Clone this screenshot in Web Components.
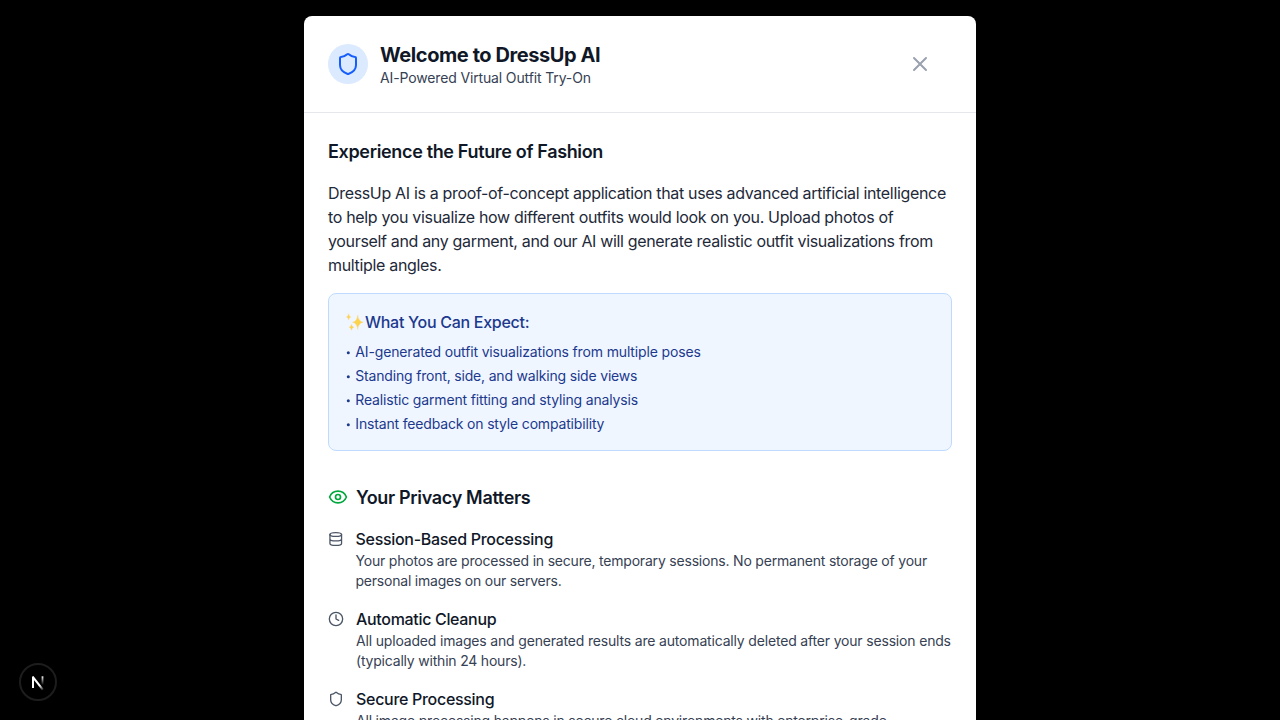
<!DOCTYPE html>
<html lang="en">
<head>
<meta charset="utf-8">
<title>DressUp AI</title>
<style>
html,body{margin:0;height:100%;background:#000;overflow:hidden}
body{font-family:Inter,"Noto Sans",sans-serif;font-size:16px;line-height:24px;color:#101828}
</style>
</head>
<body>
<welcome-page></welcome-page>
<script>
const define=(name,html,setup)=>{
  const t=document.createElement('template');t.innerHTML=html;
  customElements.define(name,class extends HTMLElement{
    constructor(){super();this.attachShadow({mode:'open'}).append(t.content.cloneNode(true));}
    connectedCallback(){if(setup)setup(this,this.shadowRoot);}
  });
};
const icons={
  shield:'<path d="M20 13c0 5-3.5 7.5-7.66 8.95a1 1 0 0 1-.67-.01C7.5 20.5 4 18 4 13V6a1 1 0 0 1 1-1c2 0 4.5-1.2 6.24-2.72a1.17 1.17 0 0 1 1.52 0C14.51 3.81 17 5 19 5a1 1 0 0 1 1 1z"/>',
  x:'<path d="M18 6 6 18M6 6l12 12"/>',
  eye:'<path d="M2.062 12.348a1 1 0 0 1 0-.696 10.75 10.75 0 0 1 19.876 0 1 1 0 0 1 0 .696 10.75 10.75 0 0 1-19.876 0"/><circle cx="12" cy="12" r="3"/>',
  database:'<ellipse cx="12" cy="5" rx="9" ry="3"/><path d="M3 5v14a9 3 0 0 0 18 0V5M3 12a9 3 0 0 0 18 0"/>',
  clock:'<circle cx="12" cy="12" r="10"/><path d="M12 6v6l4 2"/>'
};
define('line-icon','<style>:host{display:block;flex:none;width:var(--w,var(--s,16px));height:var(--s,16px)}svg{display:block;width:100%;height:100%;fill:none;stroke:currentColor;stroke-width:2;stroke-linecap:round;stroke-linejoin:round}</style><svg viewBox="0 0 24 24"></svg>',
  (el,r)=>{r.querySelector('svg').innerHTML=icons[el.getAttribute('name')];});
/* One unbroken line of text; "track" is its letter spacing in px. */
define('text-line','<style>:host{display:block;white-space:nowrap}</style><slot></slot>',
  el=>{el.style.letterSpacing=(el.getAttribute('track')||0)+'px';});
define('sparkle-icon','<style>:host{display:block;flex:none;width:20px;height:20px}svg{display:block}</style><svg width="20" height="20" viewBox="0 0 20 20"><g fill="#fcd34d" stroke="#fbd98e" stroke-width=".4"><path d="M12.700 3q.6 6.400 5.600 7.200-5 .8-5.600 7.300-.6-6.500-5.300-7.300 4.700-.8 5.300-7.200z"/><path d="M3.600 1.700q.3 2.800 2.200 3.200-1.900.4-2.200 3.200-.3-2.800-2.200-3.200 1.900-.4 2.200-3.200z"/><path d="M6.500 12.300q.3 2.600 2.400 3-2.100.4-2.400 3-.3-2.600-2.400-3 2.100-.4 2.400-3z"/></g></svg>');
define('dialog-header',`<style>
:host{display:flex;align-items:center;gap:12px;padding:24px;border-bottom:1px solid #e5e7eb}
.badge{display:flex;align-items:center;justify-content:center;width:40px;height:40px;border-radius:50%;background:#dbeafe;color:#155dfc;--s:24px}
.title{font-weight:700;font-size:20px;line-height:28px;padding-top:1px;margin-bottom:-1px;color:#101828}
.sub{font-size:14px;line-height:20px;color:#364153}
button{all:unset;display:flex;padding:0 20px;margin-left:auto;color:#99a1af;--s:24px}
</style><div class="badge"><line-icon name="shield"></line-icon></div><div><div class="title"><slot name="title"></slot></div><div class="sub"><slot name="sub"></slot></div></div><button aria-label="Close"><line-icon name="x"></line-icon></button>`);
define('info-section',`<style>:host{display:block}h3{display:flex;align-items:center;gap:8px;margin:0 0 16px;height:28px;font-size:18px;line-height:28px;font-weight:600;color:#101828}slot[name=heading]::slotted(*){padding-top:2px}</style><h3><slot name="icon"></slot><slot name="heading"></slot></h3><slot></slot>`);
define('expect-box',`<style>:host{display:block;margin-top:16px;padding:16px;border:1px solid #bedbff;border-radius:8px;background:#eff6ff;color:#1c398e}
.h{display:flex;align-items:center;height:24px;font-weight:500;margin-bottom:8px}.list{display:grid;gap:4px;font-size:14px;line-height:20px;color:#1c398e}</style><div class="h"><sparkle-icon></sparkle-icon><slot name="heading"></slot></div><div class="list"><slot></slot></div>`);
define('bullet-item','<style>:host{display:flex}.dot{width:10.300px;flex:none}svg{display:block}</style><span class="dot"><svg width="10" height="20"><circle cx="3.300" cy="10.700" r="1.500" fill="currentColor"/></svg></span><slot></slot>');
define('privacy-item',`<style>:host{display:flex;gap:12px;margin-bottom:16px}line-icon{margin-top:4px;color:#4a5565}.t{font-weight:500;line-height:24px;color:#101828}.d{font-size:14px;line-height:20px;color:#364153}</style><line-icon></line-icon><div><div class="t"><slot name="title"></slot></div><div class="d"><slot></slot></div></div>`,
  (el,r)=>{const i=r.querySelector('line-icon');i.setAttribute('name',el.getAttribute('icon'));i.shadowRoot.querySelector('svg').innerHTML=icons[el.getAttribute('icon')];});
define('dev-badge',`<style>:host{position:fixed;left:19px;top:663px;width:38px;height:38px;box-sizing:border-box;border:2px solid #1d1d1d;border-radius:50%;background:#000}svg{display:block}</style>
<svg width="34" height="34" viewBox="0 0 34 34" fill="none"><defs><linearGradient id="a" x1="16" y1="16" x2="23" y2="25" gradientUnits="userSpaceOnUse"><stop offset=".45" stop-color="#fff"/><stop offset="1" stop-color="#fff" stop-opacity="0"/></linearGradient><linearGradient id="b" x1="22" y1="11" x2="22" y2="20" gradientUnits="userSpaceOnUse"><stop stop-color="#fff"/><stop offset="1" stop-color="#fff" stop-opacity="0"/></linearGradient></defs><path d="M12 23V11.500" stroke="#fff" stroke-width="2"/><path d="M11.800 11.800 22 24.800" stroke="url(#a)" stroke-width="2.100"/><path d="M21.500 11.300v8.700" stroke="url(#b)" stroke-width="1.800"/></svg>`);
define('welcome-page',`<style>
:host{display:flex;justify-content:center;height:100vh;box-sizing:border-box;padding-top:16px;background:#000;overflow:hidden}
main{width:672px;height:900px;flex:none;background:#fff;border-radius:8px 8px 0 0}
.body{display:grid;grid-template-columns:minmax(0,1fr);gap:32px;padding:24px}
.para{color:#1e2939}
.eye{--s:20px;color:#00a63e}
</style><main>
<dialog-header><text-line slot="title" track="-.42">Welcome to DressUp AI</text-line><text-line slot="sub" track="-.14">AI-Powered Virtual Outfit Try-On</text-line></dialog-header>
<div class="body">
<info-section><text-line slot="heading" track="-.34">Experience the Future of Fashion</text-line>
<div class="para"><text-line track="-.333">DressUp AI is a proof-of-concept application that uses advanced artificial intelligence</text-line><text-line track="-.335">to help you visualize how different outfits would look on you. Upload photos of</text-line><text-line track="-.335">yourself and any garment, and our AI will generate realistic outfit visualizations from</text-line><text-line track="-.33">multiple angles.</text-line></div>
<expect-box><text-line slot="heading" track="-.28">What You Can Expect:</text-line>
<bullet-item><text-line track="-.147">AI-generated outfit visualizations from multiple poses</text-line></bullet-item>
<bullet-item><text-line track="-.185">Standing front, side, and walking side views</text-line></bullet-item>
<bullet-item><text-line track="-.15">Realistic garment fitting and styling analysis</text-line></bullet-item>
<bullet-item><text-line track="-.167">Instant feedback on style compatibility</text-line></bullet-item></expect-box></info-section>
<info-section><line-icon class="eye" slot="icon" name="eye"></line-icon><text-line slot="heading" track="-.33">Your Privacy Matters</text-line>
<privacy-item icon="database" style="--w:15.500px"><text-line slot="title" track="-.3">Session-Based Processing</text-line><text-line track="-.2">Your photos are processed in secure, temporary sessions. No permanent storage of your</text-line><text-line track="-.22">personal images on our servers.</text-line></privacy-item>
<privacy-item icon="clock"><text-line slot="title" track="-.32">Automatic Cleanup</text-line><text-line track="-.176">All uploaded images and generated results are automatically deleted after your session ends</text-line><text-line track="-.2">(typically within 24 hours).</text-line></privacy-item>
<privacy-item icon="shield"><text-line slot="title" track="-.3">Secure Processing</text-line><text-line track="-.19">All image processing happens in secure cloud environments with enterprise-grade</text-line></privacy-item>
</info-section></div></main><dev-badge></dev-badge>`);
</script>
</body>
</html>
